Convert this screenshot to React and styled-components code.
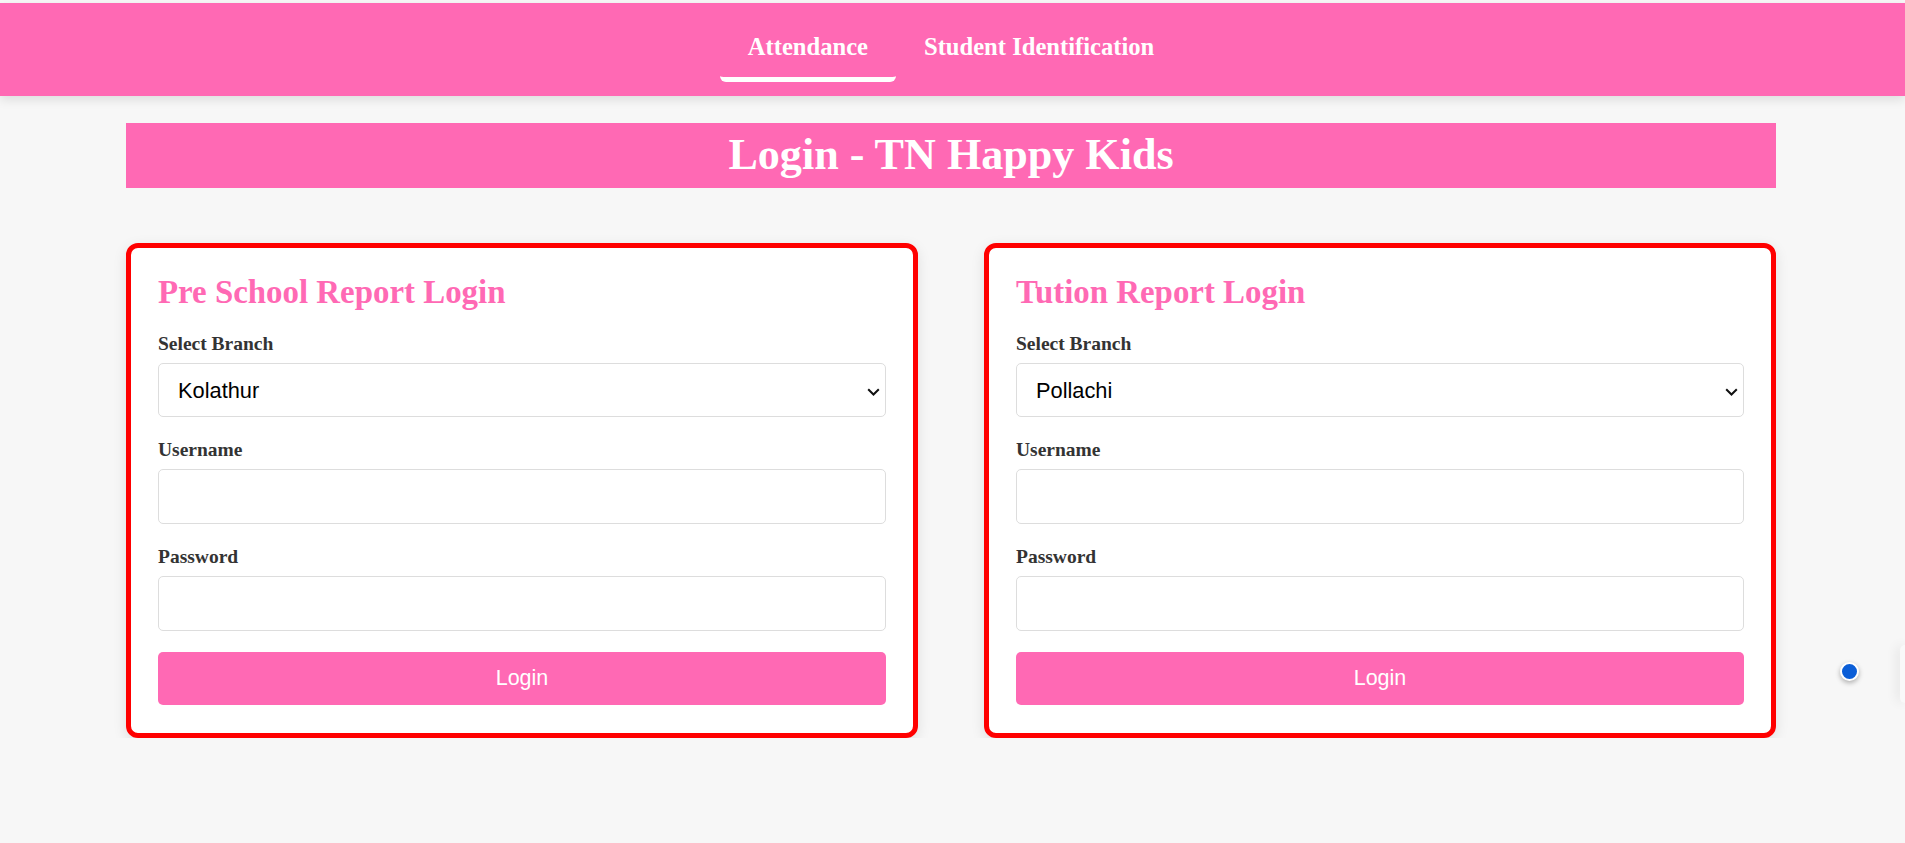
import styled, { createGlobalStyle } from "styled-components";

export default function App() {
  return (
    <>
      <GlobalStyle />
      <Header>
        <Tabs>
          {tabs.map((tab) => (
            <Tab key={tab.label} $active={tab.active}>
              {tab.label}
            </Tab>
          ))}
        </Tabs>
      </Header>

      <Main>
        <TitleBar>Login - TN Happy Kids</TitleBar>

        <Cards>
          {forms.map((form) => (
            <Card key={form.title}>
              <CardTitle>{form.title}</CardTitle>

              <Field>
                <Label>Select Branch</Label>
                <SelectWrap>
                  <Select defaultValue={form.branch}>
                    <option>{form.branch}</option>
                  </Select>
                  <Chevron width="13" height="8" viewBox="0 0 13 8">
                    <path
                      d="M1.2 1.2l5.3 5.3 5.3-5.3"
                      fill="none"
                      stroke="#111"
                      strokeWidth="2"
                    />
                  </Chevron>
                </SelectWrap>
              </Field>

              <Field>
                <Label>Username</Label>
                <Input type="text" />
              </Field>

              <Field $last>
                <Label>Password</Label>
                <Input type="password" />
              </Field>

              <Button>Login</Button>
            </Card>
          ))}
        </Cards>
      </Main>

      <Dot />
      <EdgeWidget />
    </>
  );
}

/* ===============================
   Data
================================ */

const tabs = [
  { label: "Attendance", active: true },
  { label: "Student Identification", active: false },
];

const forms = [
  { title: "Pre School Report Login", branch: "Kolathur" },
  { title: "Tution Report Login", branch: "Pollachi" },
];

/* ===============================
   Styled Components
================================ */

const GlobalStyle = createGlobalStyle`
  html, body {
    margin: 0;
    padding: 0;
    background: #f7f7f7;
    font-family: "Liberation Serif", "Times New Roman", serif;
  }

  * {
    box-sizing: border-box;
  }
`;

const Header = styled.header`
  margin-top: 3px;
  height: 93px;
  background: #ff69b4;
  box-shadow: 0 4px 10px rgba(0, 0, 0, 0.1);
  display: flex;
  align-items: center;
  justify-content: center;
  padding-right: 3px;
`;

const Tabs = styled.nav`
  display: flex;
`;

const Tab = styled.a`
  display: block;
  padding: 16px 28px 15.6px;
  line-height: 28px;
  font-size: 24.6px;
  font-weight: 700;
  color: #fff;
  border-bottom: 5px solid ${({ $active }) => ($active ? "#fff" : "transparent")};
  border-radius: 6px;
  cursor: pointer;
`;

const Main = styled.main`
  width: 1650px;
  margin: 27px auto 0;
  position: relative;
  left: -1.5px;
`;

const TitleBar = styled.h1`
  margin: 0;
  padding: 7.3px 0;
  line-height: 50.4px;
  background: #ff69b4;
  color: #fff;
  text-align: center;
  font-size: 44.1px;
  font-weight: 700;
`;

const Cards = styled.div`
  margin-top: 55px;
  display: grid;
  grid-template-columns: 1fr 1fr;
  gap: 66px;
`;

const Card = styled.section`
  background: #fff;
  border: 5px solid #ff0000;
  border-radius: 12px;
  padding: 26px 27px 28px;
  box-shadow: 0 4px 14px rgba(0, 0, 0, 0.1);
`;

const CardTitle = styled.h2`
  margin: 0 0 21px;
  font-size: 32.9px;
  line-height: 37.8px;
  font-weight: 700;
  color: #ff69b4;
`;

const Field = styled.div`
  margin-bottom: ${({ $last }) => ($last ? "21px" : "22px")};
`;

const Label = styled.label`
  display: block;
  margin-bottom: 7.5px;
  font-size: 19.5px;
  line-height: 22.4px;
  font-weight: 700;
  color: #333;
`;

const SelectWrap = styled.div`
  position: relative;
`;

const Select = styled.select`
  display: block;
  width: 100%;
  height: 54.7px;
  padding: 0 30px 0 19px;
  border: 1px solid #ddd;
  border-radius: 5px;
  background: #fff;
  color: #000;
  font-family: "Liberation Sans", Arial, sans-serif;
  font-size: 21.8px;
  appearance: none;
  -webkit-appearance: none;
  outline: none;
`;

const Chevron = styled.svg`
  position: absolute;
  right: 6px;
  top: 25px;
  pointer-events: none;
`;

const Input = styled.input`
  display: block;
  width: 100%;
  height: 54.7px;
  padding: 0 14.6px;
  border: 1px solid #ddd;
  border-radius: 5px;
  background: #fff;
  font-family: "Liberation Sans", Arial, sans-serif;
  font-size: 21.8px;
  outline: none;
`;

const Button = styled.button`
  display: block;
  width: 100%;
  height: 53.3px;
  border: none;
  border-radius: 5px;
  background: #ff69b4;
  color: #fff;
  font-family: "Liberation Sans", Arial, sans-serif;
  font-size: 21.5px;
  cursor: pointer;
`;

const Dot = styled.div`
  position: absolute;
  left: 1839.5px;
  top: 662px;
  width: 19px;
  height: 19px;
  border-radius: 50%;
  background: #0b5ed7;
  border: 2px solid #fff;
  box-shadow: 0 2px 5px rgba(0, 0, 0, 0.3);
`;

const EdgeWidget = styled.div`
  position: absolute;
  left: 1900px;
  top: 645px;
  width: 5px;
  height: 58px;
  background: #f9f9f9;
  box-shadow: -2px 0 12px rgba(0, 0, 0, 0.12);
  border-radius: 8px 0 0 8px;
`;
